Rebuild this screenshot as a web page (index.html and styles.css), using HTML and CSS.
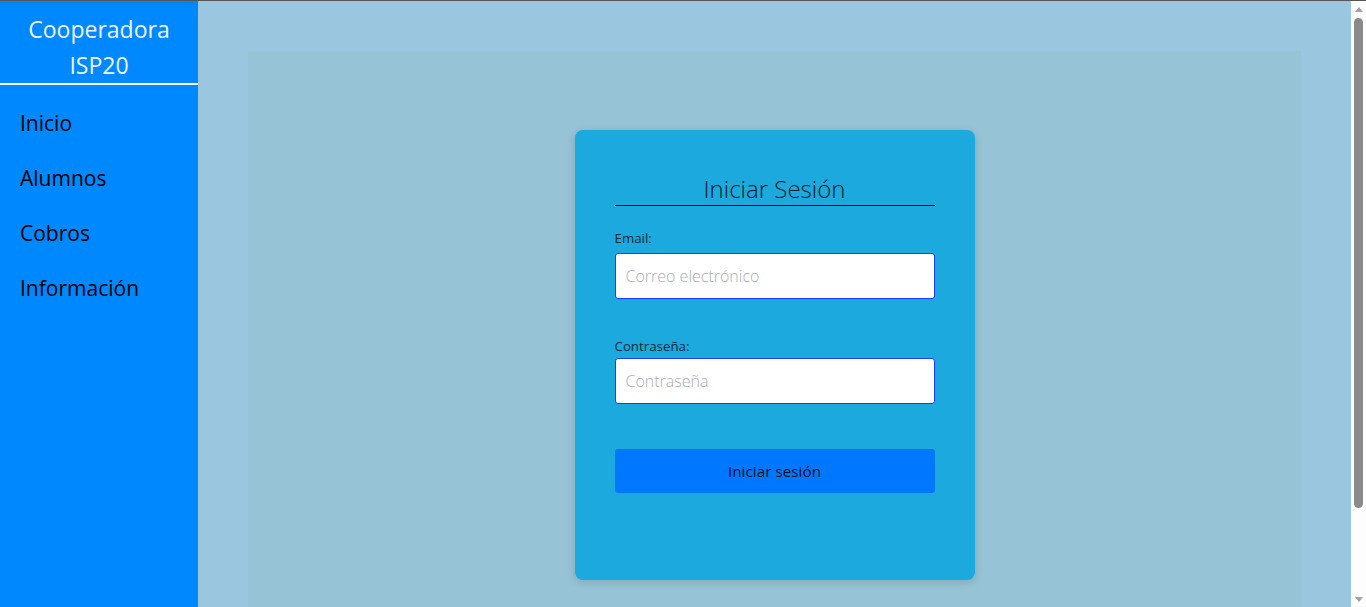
FILE: index.html
```html
<!DOCTYPE html>
<html lang="es">
<head>
<meta charset="utf-8">
<title>Cooperadora ISP20</title>
<link rel="stylesheet" href="styles.css">
</head>
<body>
<div class="layout">
  <aside class="sidebar">
    <div class="brand">Cooperadora<br>ISP20</div>
    <nav class="nav">
      <a href="#">Inicio</a>
      <a href="#">Alumnos</a>
      <a href="#">Cobros</a>
      <a href="#">Información</a>
    </nav>
  </aside>
  <main class="main">
    <section class="panel">
      <form class="card">
        <h1 class="card-title">Iniciar Sesión</h1>
        <label class="label" for="email">Email:</label>
        <input class="input" id="email" type="email" placeholder="Correo electrónico">
        <label class="label label-gap" for="pass">Contraseña:</label>
        <input class="input" id="pass" type="password" placeholder="Contraseña">
        <button class="btn" type="button">Iniciar sesión</button>
      </form>
    </section>
  </main>
</div>
<div class="scrollbar" aria-hidden="true">
  <span class="arrow arrow-up"></span>
  <span class="thumb"></span>
  <span class="arrow arrow-down"></span>
</div>
</body>
</html>
```

FILE: styles.css
```css
* { box-sizing: border-box; }
html, body { margin: 0; padding: 0; }
body {
  font-family: "Open Sans", "Noto Sans", sans-serif;
  background: #9bc6e0;
  border-top: 1px solid #555;
}
.layout {
  display: flex;
  align-items: flex-start;
  margin-right: 15px;
}
.sidebar {
  width: 198px;
  flex: 0 0 198px;
  height: 100vh;
  position: sticky;
  top: 0;
  background: #0088ff;
}
.brand {
  color: #f0f4f8;
  font-size: 23px;
  line-height: 36px;
  text-align: center;
  padding: 10px 0 0;
  border-bottom: 2px solid #ffffff;
}
.nav {
  display: flex;
  flex-direction: column;
  padding-top: 24px;
  gap: 27px;
}
.nav a {
  color: #000;
  text-decoration: none;
  font-size: 21px;
  line-height: 28px;
  padding-left: 20px;
}
.main {
  flex: 1;
  padding: 50px 50px;
}
.panel {
  height: 100vh;
  background: #96c3d5;
  display: flex;
  align-items: center;
  justify-content: center;
}
.card {
  width: 400px;
  height: 450px;
  background: #1ba9de;
  border-radius: 8px;
  box-shadow: 0 2px 8px rgba(0,0,0,0.15);
  padding: 40px;
  display: flex;
  flex-direction: column;
}
.card-title {
  margin: 2px 0 0;
  font-weight: 300;
  font-size: 24px;
  line-height: 33px;
  text-align: center;
  color: #071c27;
  border-bottom: 1px solid #000;
}
.label {
  font-size: 13.3px;
  line-height: 18px;
  color: #0d2a38;
  margin-top: 23px;
  margin-bottom: 6px;
}
.label-gap { margin-top: 38px; margin-bottom: 3px; }
.input {
  height: 46px;
  border: 1px solid #1a3cff;
  border-radius: 3px;
  background: #fff;
  padding: 0 10px;
  font-family: "Open Sans", "Noto Sans", sans-serif;
  font-size: 16px;
  font-weight: 300;
  color: #222;
}
.input::placeholder { color: #a9adb8; }
.btn {
  margin-top: 45px;
  height: 44px;
  border: none;
  border-radius: 3px;
  background: #0077ff;
  color: #0a1020;
  font-family: "Open Sans", "Noto Sans", sans-serif;
  font-size: 15.3px;
}
.scrollbar {
  position: fixed;
  top: 1px;
  right: 0;
  width: 15px;
  height: calc(100vh - 1px);
  background: #fdfdfd;
  display: flex;
  flex-direction: column;
  align-items: center;
}
.arrow {
  width: 0;
  height: 0;
  border-left: 4px solid transparent;
  border-right: 4px solid transparent;
}
.arrow-up {
  margin-top: 6px;
  border-bottom: 5px solid #a3a3a3;
}
.arrow-down {
  margin-top: auto;
  margin-bottom: 5px;
  border-top: 5px solid #a3a3a3;
}
.thumb {
  margin-top: 6px;
  width: 9px;
  height: 490px;
  border-radius: 5px;
  background: #8a8a8a;
}
```
